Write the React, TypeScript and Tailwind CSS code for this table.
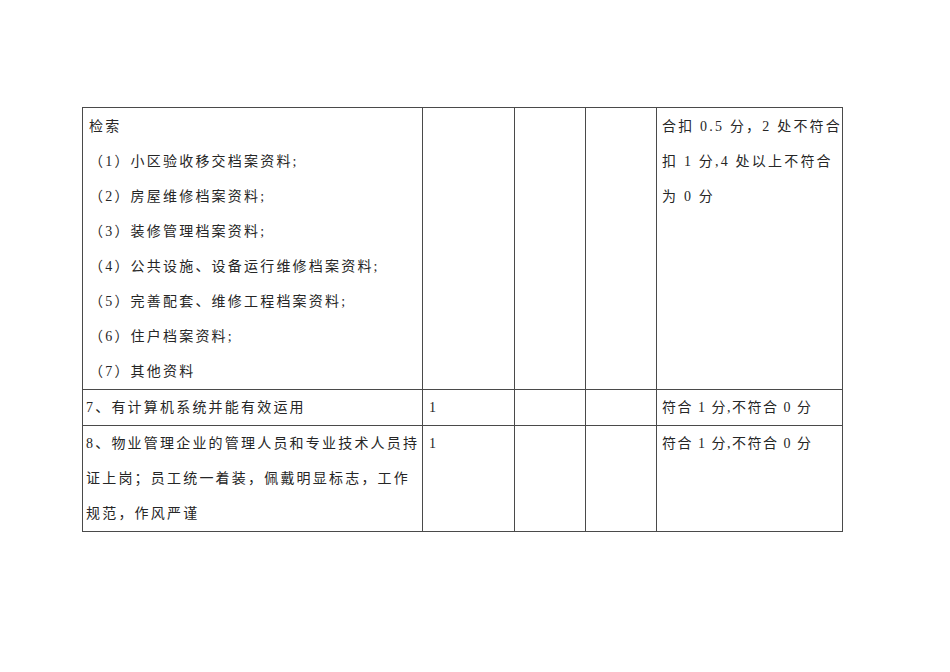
const font = { fontFamily: '"Liberation Serif", "Noto Sans CJK SC", serif' };

const firstCell = [
  "检索",
  "（1）小区验收移交档案资料;",
  "（2）房屋维修档案资料;",
  "（3）装修管理档案资料;",
  "（4）公共设施、设备运行维修档案资料;",
  "（5）完善配套、维修工程档案资料;",
  "（6）住户档案资料;",
  "（7）其他资料",
];

function Lines({ lines }: { lines: string[] }) {
  return (
    <>
      {lines.map((l, i) => (
        <div key={i} className="whitespace-pre">
          {l}
        </div>
      ))}
    </>
  );
}

export default function App() {
  const cell = "border border-[#4a4a4a] align-top p-0";
  return (
    <div className="min-h-[672px] w-[950px] bg-white pl-[82px] pt-[107px]" style={font}>
      <table className="table-fixed border-collapse text-[14px] leading-[35px] tracking-[2.2px] text-[#262626]">
        <colgroup>
          <col className="w-[340px]" />
          <col className="w-[92px]" />
          <col className="w-[71px]" />
          <col className="w-[71px]" />
          <col className="w-[184px]" />
        </colgroup>
        <tbody>
          <tr className="h-[282px]">
            <td className={cell}>
              <div className="pl-[6px] pt-[1px]">
                <Lines lines={firstCell} />
              </div>
            </td>
            <td className={cell}></td>
            <td className={cell}></td>
            <td className={cell}></td>
            <td className={cell}>
              <div className="pl-[5px] pt-[1px]">
                <Lines lines={["合扣 0.5 分，2 处不符合", "扣 1 分,4 处以上不符合", "为 0 分"]} />
              </div>
            </td>
          </tr>
          <tr className="h-[34px]">
            <td className={cell}>
              <div className="pl-[3px]">
                <Lines lines={["7、有计算机系统并能有效运用"]} />
              </div>
            </td>
            <td className={cell}>
              <div className="pl-[6px]">1</div>
            </td>
            <td className={cell}></td>
            <td className={cell}></td>
            <td className={cell}>
              <div className="pl-[5px] tracking-[1.5px]">符合 1 分,不符合 0 分</div>
            </td>
          </tr>
          <tr className="h-[105px]">
            <td className={cell}>
              <div className="pl-[3px]">
                <Lines
                  lines={[
                    "8、物业管理企业的管理人员和专业技术人员持",
                    "证上岗；员工统一着装，佩戴明显标志，工作",
                    "规范，作风严谨",
                  ]}
                />
              </div>
            </td>
            <td className={cell}>
              <div className="pl-[6px]">1</div>
            </td>
            <td className={cell}></td>
            <td className={cell}></td>
            <td className={cell}>
              <div className="pl-[5px] tracking-[1.5px]">符合 1 分,不符合 0 分</div>
            </td>
          </tr>
        </tbody>
      </table>
    </div>
  );
}
